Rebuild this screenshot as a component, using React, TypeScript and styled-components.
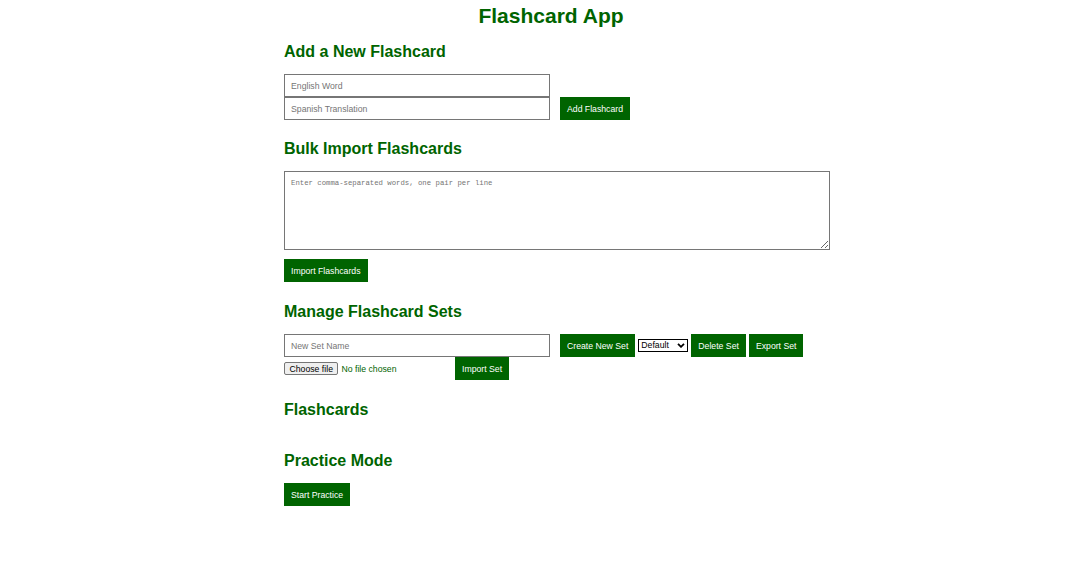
import { createGlobalStyle, styled } from "styled-components";

const GREEN = "#006400";

const GlobalStyle = createGlobalStyle`
  body {
    margin: 0;
    background: #fff;
    color: ${GREEN};
    font-family: "Liberation Sans", Arial, sans-serif;
  }
  * { box-sizing: border-box; }
`;

const Page = styled.div`
  padding-left: 10px;
`;

const Container = styled.div`
  width: 534px;
  margin: 0 auto;
`;

const Title = styled.h1`
  margin: 4px 0 0;
  font-size: 21px;
  line-height: 24px;
  text-align: center;
  color: ${GREEN};
`;

const Section = styled.section<{ $top: number }>`
  margin-top: ${(p) => p.$top}px;
`;

const SectionTitle = styled.h2`
  margin: 0 0 13px;
  font-size: 16px;
  line-height: 18px;
  color: ${GREEN};
`;

const Row = styled.div<{ $align?: string }>`
  display: flex;
  align-items: ${(p) => p.$align || "center"};
`;

const Stack = styled.div`
  display: flex;
  flex-direction: column;
`;

const TextInput = styled.input`
  width: 266px;
  height: 23px;
  padding: 0 6px;
  border: 1px solid #767676;
  font-family: "Liberation Sans", Arial, sans-serif;
  font-size: 8.7px;
  color: #000;
  outline: none;
  &::placeholder { color: #757575; }
`;

const TextArea = styled.textarea`
  display: block;
  width: 546px;
  height: 79px;
  padding: 7px 6px;
  border: 1px solid #767676;
  font-family: "Liberation Mono", "DejaVu Sans Mono", monospace;
  font-size: 7.3px;
  color: #000;
  resize: both;
  outline: none;
  &::placeholder { color: #757575; }
`;

const Button = styled.button<{ $ml?: number; $mt?: number }>`
  height: 23px;
  padding: 0 7px;
  margin-left: ${(p) => p.$ml ?? 0}px;
  margin-top: ${(p) => p.$mt ?? 0}px;
  border: none;
  background: ${GREEN};
  color: #fff;
  font-family: "Liberation Sans", Arial, sans-serif;
  font-size: 8.7px;
  white-space: nowrap;
  cursor: pointer;
`;

const SelectWrap = styled.div`
  position: relative;
  margin-left: 3px;
  display: flex;
`;

const SetSelect = styled.select`
  appearance: none;
  width: 50px;
  height: 13px;
  padding: 0 12px 0 2px;
  border: 1px solid #000;
  border-radius: 0;
  background: #fff;
  color: #000;
  font-family: "Liberation Sans", Arial, sans-serif;
  font-size: 8.7px;
  line-height: 11px;
`;

const Chevron = styled.svg`
  position: absolute;
  right: 3px;
  top: 4px;
  pointer-events: none;
`;

const FilePicker = styled.label`
  width: 171px;
  display: flex;
  align-items: center;
  gap: 3px;
  font-size: 8.7px;
  color: ${GREEN};
`;

const FileButton = styled.span`
  height: 13px;
  padding: 0 4.5px;
  display: flex;
  align-items: center;
  border: 1px solid #767676;
  border-radius: 2px;
  background: #efefef;
  color: #000;
`;

const HiddenFile = styled.input`
  display: none;
`;

export default function App() {
  return (
    <>
      <GlobalStyle />
      <Page>
        <Container>
          <Title>Flashcard App</Title>

          <Section $top={15}>
            <SectionTitle>Add a New Flashcard</SectionTitle>
            <Row $align="flex-end">
              <Stack>
                <TextInput placeholder="English Word" />
                <TextInput placeholder="Spanish Translation" />
              </Stack>
              <Button $ml={10}>Add Flashcard</Button>
            </Row>
          </Section>

          <Section $top={20}>
            <SectionTitle>Bulk Import Flashcards</SectionTitle>
            <TextArea placeholder="Enter comma-separated words, one pair per line" />
            <Button $mt={9}>Import Flashcards</Button>
          </Section>

          <Section $top={21}>
            <SectionTitle>Manage Flashcard Sets</SectionTitle>
            <Row>
              <TextInput placeholder="New Set Name" />
              <Button $ml={10}>Create New Set</Button>
              <SelectWrap>
                <SetSelect defaultValue="Default">
                  <option>Default</option>
                </SetSelect>
                <Chevron width="8" height="5" viewBox="0 0 8 5">
                  <path d="M1 0.8 L4 3.8 L7 0.8" fill="none" stroke="#000" strokeWidth="1.8" />
                </Chevron>
              </SelectWrap>
              <Button $ml={3}>Delete Set</Button>
              <Button $ml={3}>Export Set</Button>
            </Row>
            <Row>
              <FilePicker>
                <FileButton>Choose file</FileButton>
                <span>No file chosen</span>
                <HiddenFile type="file" />
              </FilePicker>
              <Button>Import Set</Button>
            </Row>
          </Section>

          <Section $top={21}>
            <SectionTitle>Flashcards</SectionTitle>
          </Section>

          <Section $top={33}>
            <SectionTitle>Practice Mode</SectionTitle>
            <Button>Start Practice</Button>
          </Section>
        </Container>
      </Page>
    </>
  );
}
